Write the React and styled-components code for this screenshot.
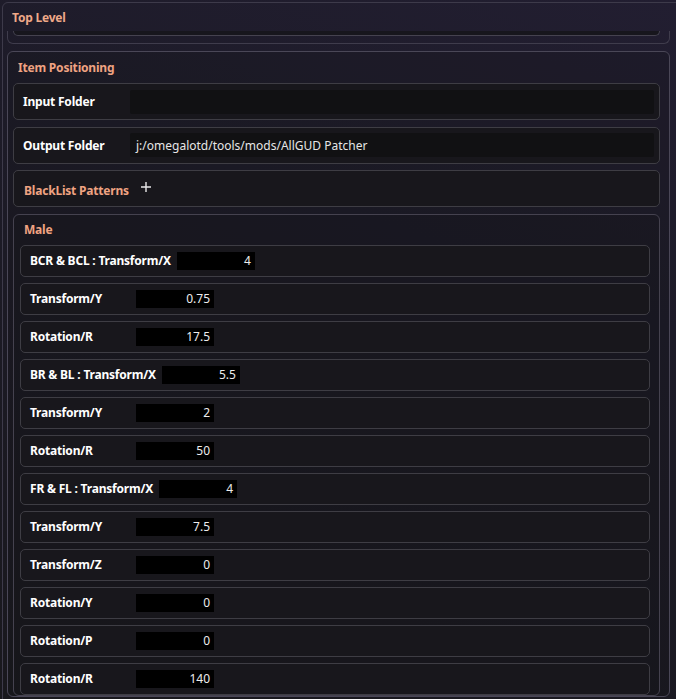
import React from "react";
import styled, { createGlobalStyle } from "styled-components";

const Global = createGlobalStyle`
  html, body { margin: 0; padding: 0; }
  body {
    width: 676px;
    height: 699px;
    overflow: hidden;
    background: linear-gradient(200deg, #221e31 0%, #1d1b28 35%, #19181d 100%);
    font-family: "Noto Sans", "Open Sans", sans-serif;
    font-size: 12px;
    color: #f2f2f2;
  }
`;

const Page = styled.div`
  padding: 2px 0 0 2px;
`;

const Panel = styled.section`
  width: 685px;
  min-height: 720px;
  border: 1px solid #3d3a4a;
  border-radius: 6px;
  box-sizing: border-box;
  padding: 0 16px 0 4px;
  display: flex;
  flex-direction: column;
  gap: 7px;
`;

const PanelHeader = styled.div`
  height: 28px;
  padding-left: 5px;
  display: flex;
  align-items: center;
  font-weight: 700;
  letter-spacing: -0.2px;
  color: #efa988;
`;

const Tail = styled.div`
  margin-top: -7px;
  border: 1px solid #3f3c4c;
  border-top: none;
  border-radius: 0 0 6px 6px;
  padding: 0 9px 7px 5px;
`;

const TailBox = styled.div`
  height: 4px;
  border: 1px solid #45424f;
  border-top: none;
  border-radius: 0 0 5px 5px;
  background: #17161d;
`;

const Card = styled.div`
  border: 1px solid ${(p) => p.$border || "#45424f"};
  border-radius: 6px;
  padding: ${(p) => p.$pad || "0 9px 0 5px"};
  display: flex;
  flex-direction: column;
  gap: ${(p) => p.$gap || "6px"};
  background: rgba(20, 19, 24, 0.25);
`;

const Title = styled.div`
  font-weight: 700;
  color: #efa382;
  line-height: 16px;
  letter-spacing: -0.2px;
  padding: ${(p) => p.$pad || "8px 0 0 10px"};
`;

const Row = styled.div`
  box-sizing: border-box;
  height: ${(p) => p.$h || "32px"};
  border: 1px solid #3e3d44;
  border-radius: 5px;
  background: #18171c;
  display: flex;
  align-items: center;
  padding: ${(p) => p.$pad || "0 5px 0 9px"};
`;

const Label = styled.span`
  font-weight: 700;
  color: #ffffff;
  min-width: 100px;
  margin-right: ${(p) => p.$gap || "6px"};
  letter-spacing: -0.2px;
  white-space: nowrap;
`;

const TitleLabel = styled(Label)`
  color: #efa382;
  margin-top: 3px;
`;

const TextInput = styled.div`
  flex: 1;
  height: 24px;
  background: #111113;
  border-radius: 2px;
  display: flex;
  align-items: center;
  padding-left: 6px;
  color: #e6e6e6;
  white-space: nowrap;
`;

const NumInput = styled.div`
  width: 78px;
  height: 18px;
  background: #000;
  box-sizing: border-box;
  display: flex;
  align-items: center;
  justify-content: flex-end;
  padding-right: 4px;
  color: #ededed;
`;

const PlusButton = styled.button`
  margin-left: 4px;
  margin-top: -3px;
  width: 14px;
  height: 14px;
  padding: 0;
  border: none;
  background: none;
  display: flex;
  align-items: center;
  justify-content: center;
  cursor: pointer;
`;

const rows = [
  ["BCR & BCL : Transform/X", "4"],
  ["Transform/Y", "0.75"],
  ["Rotation/R", "17.5"],
  ["BR & BL : Transform/X", "5.5"],
  ["Transform/Y", "2"],
  ["Rotation/R", "50"],
  ["FR & FL : Transform/X", "4"],
  ["Transform/Y", "7.5"],
  ["Transform/Z", "0"],
  ["Rotation/Y", "0"],
  ["Rotation/P", "0"],
  ["Rotation/R", "140"],
];

export default function App() {
  return (
    <>
      <Global />
      <Page>
        <Panel>
          <PanelHeader>Top Level</PanelHeader>
          <Tail>
            <TailBox />
          </Tail>
          <Card $border="#4a4757" $gap="6.5px">
            <Title $pad="8px 0 0.5px 5px">Item Positioning</Title>
            <Row $h="37px">
              <Label $gap="7px">Input Folder</Label>
              <TextInput />
            </Row>
            <Row $h="37px">
              <Label $gap="7px">Output Folder</Label>
              <TextInput>j:/omegalotd/tools/mods/AllGUD Patcher</TextInput>
            </Row>
            <Row $h="37px" $pad="0 5px 0 10px">
              <TitleLabel>BlackList Patterns</TitleLabel>
              <PlusButton aria-label="add">
                <svg width="12" height="12" viewBox="0 0 12 12">
                  <path d="M6 1v10M1 6h10" stroke="#e8e8e8" strokeWidth="1.4" />
                </svg>
              </PlusButton>
            </Row>
            <Card $border="#45424f" $pad="0 9px 0 6px" $gap="6px">
              <Title $pad="7px 0 1px 4px">Male</Title>
              {rows.map(([l, v], i) => (
                <Row key={i} $pad="0 5px 0 9px">
                  <Label>{l}</Label>
                  <NumInput>{v}</NumInput>
                </Row>
              ))}
            </Card>
          </Card>
        </Panel>
      </Page>
    </>
  );
}
